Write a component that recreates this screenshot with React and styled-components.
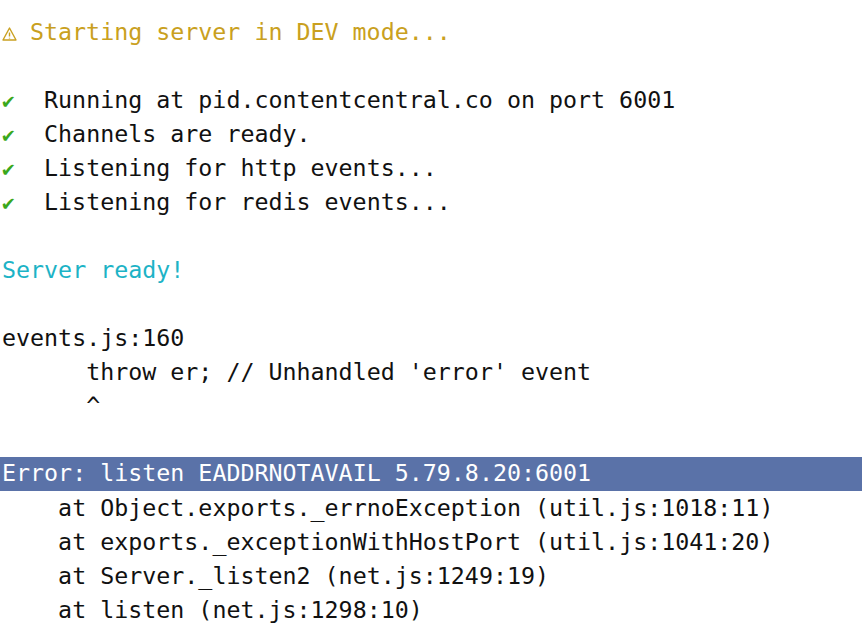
import React from 'react'
import styled, { createGlobalStyle } from 'styled-components'

const GlobalStyle = createGlobalStyle`
  html, body {
    margin: 0;
    padding: 0;
    background: #fff;
  }
`

const Terminal = styled.div`
  width: 862px;
  height: 628px;
  overflow: hidden;
  padding-top: 15px;
  box-sizing: border-box;
  font-family: 'DejaVu Sans Mono', 'Liberation Mono', monospace;
  font-size: 23.3px;
  line-height: 34px;
  color: #111;
  background: #fff;
`

const Line = styled.div`
  height: 34px;
  padding-left: 2px;
  white-space: pre;
  color: ${(p) => p.color || '#111'};
  background: ${(p) => (p.selected ? '#5a72a8' : 'transparent')};
  ${(p) => p.selected && 'color: #fff; line-height: 32px;'}
`

const Check = styled.span`
  display: inline-block;
  width: 14px;
  color: #3aa81c;
  font-size: 21px;
  font-weight: bold;
`

const Warn = styled.svg`
  display: inline-block;
  width: 15px;
  height: 14px;
  margin-right: 13px;
  vertical-align: -1px;
`

const WarningIcon = () => (
  <Warn viewBox="0 0 15 14">
    <path d="M7.5 1 L14 13 L1 13 Z" fill="none" stroke="#c9a020" strokeWidth="1.4" strokeLinejoin="round" />
    <path d="M7.5 5.5 V9.5 M7.5 10.8 V11.6" stroke="#c9a020" strokeWidth="1.4" />
  </Warn>
)

const checks = [
  'Running at pid.contentcentral.co on port 6001',
  'Channels are ready.',
  'Listening for http events...',
  'Listening for redis events...',
]

const stack = [
  'at Object.exports._errnoException (util.js:1018:11)',
  'at exports._exceptionWithHostPort (util.js:1041:20)',
  'at Server._listen2 (net.js:1249:19)',
  'at listen (net.js:1298:10)',
]

const App = () => (
  <>
    <GlobalStyle />
    <Terminal>
      <Line color="#c9a020">
        <WarningIcon />
        Starting server in DEV mode...
      </Line>
      <Line />
      {checks.map((text) => (
        <Line key={text}>
          <Check>✔</Check>
          {'  ' + text}
        </Line>
      ))}
      <Line />
      <Line color="#1db3c6">Server ready!</Line>
      <Line />
      <Line>events.js:160</Line>
      <Line>{"      throw er; // Unhandled 'error' event"}</Line>
      <Line>{'      ^'}</Line>
      <Line />
      <Line selected>Error: listen EADDRNOTAVAIL 5.79.8.20:6001</Line>
      {stack.map((text) => (
        <Line key={text}>{'    ' + text}</Line>
      ))}
    </Terminal>
  </>
)

export default App
